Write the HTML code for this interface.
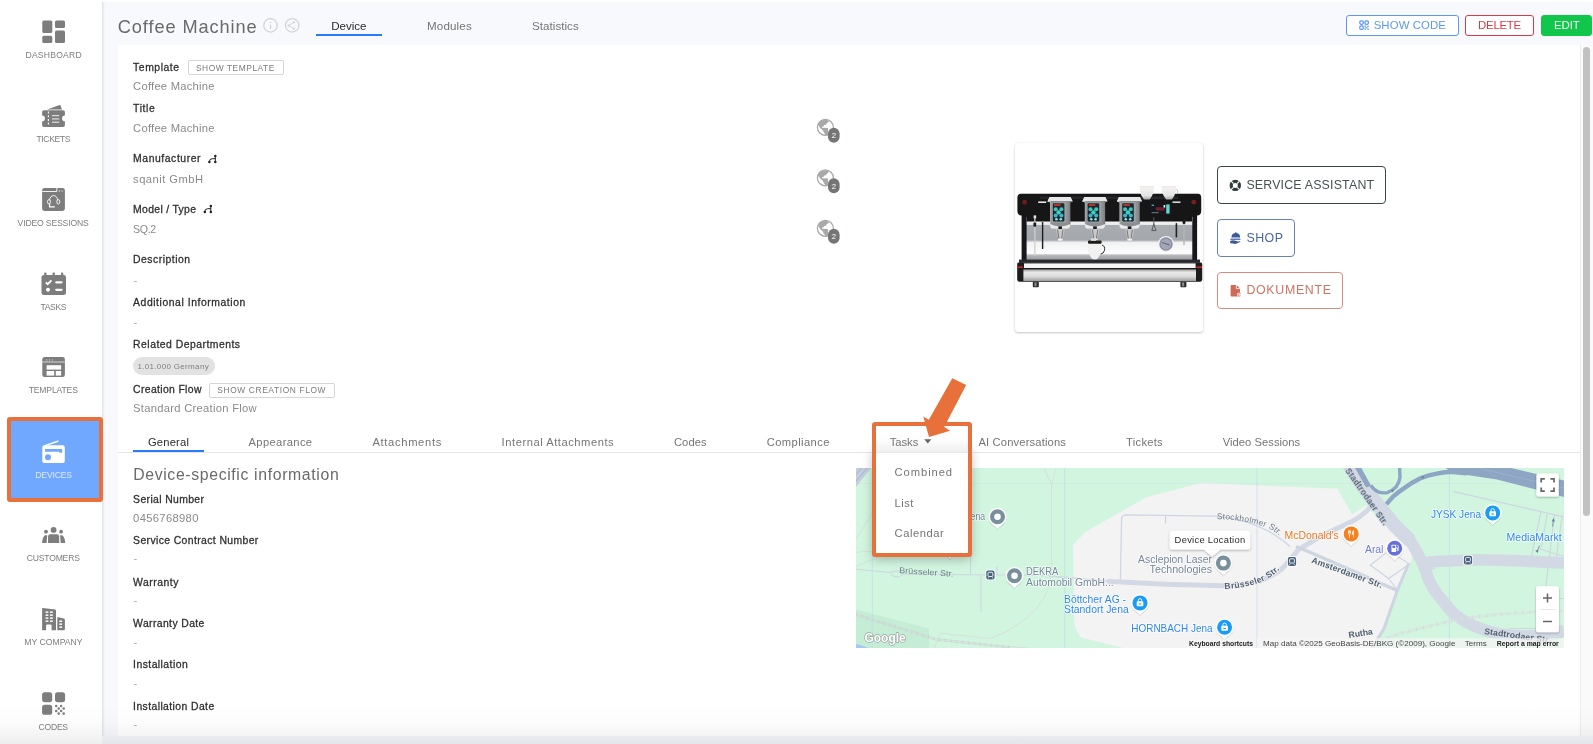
<!DOCTYPE html>
<html><head><meta charset="utf-8"><title>Coffee Machine</title>
<style>
*{box-sizing:border-box;margin:0;padding:0}
html,body{width:1593px;height:744px;overflow:hidden;background:#fff;font-family:"Liberation Sans",sans-serif}
.abs{position:absolute}
.t{position:absolute;white-space:pre;line-height:1;font-family:"Liberation Sans",sans-serif}
#main{position:absolute;left:102px;top:2px;width:1491px;height:742px;background:#f8f9fd}
#side{position:absolute;left:0;top:0;width:102px;height:744px;background:#fff}
#sideedge{position:absolute;left:102px;top:2px;width:5px;height:742px;background:linear-gradient(90deg,#e3e3e5 0,#e9e9ec 1px,#f2f2f7 2px,#f7f8fc 3.2px,#f8f9fd 5px)}
#card{position:absolute;left:118px;top:45px;width:1462px;height:691px;background:#fff}
#sbtrack{position:absolute;left:1580px;top:45px;width:13px;height:691px;background:#fafafa;border-left:1px solid #ececec}
#sbthumb{position:absolute;left:1583px;top:47px;width:7px;height:469px;border-radius:4px;background:#c1c1c1}
#botstrip{position:absolute;left:102px;top:736px;width:1491px;height:8px;background:#f5f6fa}
#botfade{position:absolute;left:0;top:706px;width:1593px;height:38px;background:linear-gradient(180deg,rgba(80,80,90,0) 0,rgba(80,80,90,.02) 45%,rgba(80,80,90,.095) 100%);z-index:50}
.btn{position:absolute;border:1px solid;border-radius:3px;background:#fff}
#devbox{position:absolute;left:7px;top:417px;width:96px;height:85px;background:#70a7ff;border:4px solid #e8703a;border-radius:3px}
.hl{position:absolute;height:2px;background:#2a7aff}
#txt{position:absolute;left:0;top:0;width:1593px;height:744px;will-change:transform;z-index:30}
#tabline{position:absolute;left:118px;top:452px;width:1462px;height:1px;background:#e6e6e6}
</style></head><body>
<div id="main"></div>
<div id="side"></div>
<div id="sideedge"></div>
<div id="card"></div>
<div id="sbtrack"></div><div id="sbthumb"></div>
<div id="botstrip"></div>
<div id="devbox"></div>
<!-- header -->
<div class="hl" style="left:316px;top:33.6px;width:66px"></div>
<div class="btn" style="left:1346px;top:15px;width:113px;height:21px;border-color:#5b97f5"></div>
<div class="btn" style="left:1465px;top:15px;width:69px;height:21px;border-color:#d83a4a"></div>
<div class="btn" style="left:1541px;top:15px;width:51px;height:21px;border-color:#10c64b;background:#10c64b"></div>
<!-- small buttons -->
<div class="btn" style="left:187.5px;top:60px;width:96.5px;height:15px;border-color:#d6d6d6;border-radius:2px"></div>
<div class="btn" style="left:209px;top:382.5px;width:125.5px;height:15px;border-color:#d6d6d6;border-radius:2px"></div>
<div class="abs" style="left:133px;top:356.5px;width:82px;height:18.5px;border-radius:10px;background:#e2e2e2"></div>
<!-- tabs -->
<div id="tabline"></div>
<div class="hl" style="left:133px;top:449.6px;width:71px"></div>
<!-- right buttons -->
<div class="btn" style="left:1217px;top:166px;width:168.5px;height:37.5px;border-color:#3a4646;border-radius:4px"></div>
<div class="btn" style="left:1217px;top:219px;width:77.5px;height:37.5px;border-color:#6683b5;border-radius:4px"></div>
<div class="btn" style="left:1217px;top:271.5px;width:126px;height:37.5px;border-color:#dd8a7a;border-radius:4px"></div>
<!-- sidebar icons -->
<svg class="abs" style="left:0;top:0;z-index:5" width="110" height="744" viewBox="0 0 110 744">
<g fill="#7d7d7d">
<!-- dashboard -->
<rect x="42.3" y="20.5" width="10" height="12.6" rx="1.6"/>
<rect x="55" y="20.5" width="10" height="7.5" rx="1.6"/>
<rect x="42.3" y="35.7" width="10" height="7.4" rx="1.6"/>
<rect x="55" y="30.6" width="10" height="12.5" rx="1.6"/>
<!-- tickets -->
<polygon points="47.2,109.6 59.6,105.1 60.6,105.5 62,109.6" />
<path d="M44 110.2 H63 a1.9 1.9 0 0 1 1.9 1.9 V115.6 a2.7 2.7 0 0 0 0 5.6 V125 a1.9 1.9 0 0 1 -1.9 1.9 H44 a1.9 1.9 0 0 1 -1.9 -1.9 V121.2 a2.7 2.7 0 0 0 0 -5.6 V112.1 a1.9 1.9 0 0 1 1.9 -1.9 Z"/>
<!-- video sessions -->
<rect x="42.1" y="188" width="22.8" height="22.9" rx="2.4"/>
<!-- tasks -->
<rect x="41.5" y="274.9" width="24.5" height="20.2" rx="2.4"/>
<rect x="44.2" y="272.4" width="2.2" height="4" rx="0.8"/>
<rect x="52.6" y="272.4" width="2.2" height="4" rx="0.8"/>
<rect x="61" y="272.4" width="2.2" height="4" rx="0.8"/>
<!-- templates -->
<rect x="42.3" y="357.1" width="22.6" height="20" rx="2.4"/>
<!-- customers -->
<circle cx="53.6" cy="529.9" r="2.9"/>
<path d="M50.2 534.2 H57 a2.2 2.2 0 0 1 2.1 2 L59.3 543 H48 L48.1 536.2 a2.2 2.2 0 0 1 2.1 -2 Z"/>
<circle cx="46" cy="531.7" r="1.9"/>
<circle cx="61.1" cy="531.7" r="1.9"/>
<path d="M45 535.2 H47.2 L46.6 543 H42.1 Q42.3 537.2 45 535.2 Z"/>
<path d="M62.2 535.2 H60.1 L60.7 543 H65.2 Q65 537.2 62.2 535.2 Z"/>
<!-- my company -->
<path d="M42.1 608.6 Q42.1 607.8 43 607.9 L55 609.4 Q56 609.5 56 610.4 V630.3 H51.6 V625.4 Q51.6 624.4 50.6 624.4 H47.1 Q46.1 624.4 46.1 625.4 V630.3 H42.1 Z"/>
<path d="M57.3 616.9 L63.8 618.6 Q64.9 618.9 64.9 620 V629.3 Q64.9 630.3 63.9 630.3 H57.3 Z"/>
<!-- codes -->
<rect x="42.1" y="692.2" width="10.1" height="10" rx="2.6"/>
<rect x="55" y="692.2" width="10.1" height="10" rx="2.6"/>
<rect x="42.1" y="704.8" width="10.1" height="10" rx="2.6"/>
<g>
<circle cx="56.2" cy="706" r="1.3"/><circle cx="61.1" cy="706" r="1.3"/>
<circle cx="58.7" cy="708.5" r="1.3"/><circle cx="63.7" cy="708.5" r="1.3"/>
<circle cx="56.2" cy="711" r="1.3"/><circle cx="61.1" cy="711" r="1.3"/>
<circle cx="58.7" cy="713.6" r="1.3"/><circle cx="63.7" cy="713.6" r="1.3"/>
</g>
</g>
<!-- ticket details -->
<g stroke="#fff" fill="none">
<line x1="48.4" y1="111.5" x2="48.4" y2="126" stroke-width="1.1" stroke-dasharray="2 1.7"/>
<g stroke="#d9d9d9" stroke-width="1.3"><line x1="52" y1="115.6" x2="59.2" y2="115.6"/><line x1="52" y1="118.9" x2="59.2" y2="118.9"/><line x1="52" y1="122.2" x2="59.2" y2="122.2"/></g>
</g>
<!-- video sessions details -->
<g stroke="#fff" fill="none" stroke-width="0.9">
<path d="M42.1 191.5 H56.8 V188"/>
<path d="M49.6 200.2 a4 4.6 0 0 1 8 0"/>
<ellipse cx="49" cy="201.8" rx="1.5" ry="2.2"/>
<ellipse cx="58.3" cy="201.8" rx="1.5" ry="2.2"/>
<path d="M49.6 204 V206.9 H54.8" stroke-width="1.1"/>
</g>
<circle cx="59.4" cy="191" r="0.7" fill="#ddd"/><circle cx="62.2" cy="191" r="0.7" fill="#ddd"/>
<!-- tasks details -->
<g stroke="#fff" fill="none" stroke-linecap="round">
<path d="M45.8 282.3 L47.7 284.2 L51.4 280.4" stroke-width="1.9" stroke-linejoin="miter" stroke-linecap="butt"/>
<line x1="56.3" y1="282.3" x2="61.5" y2="282.3" stroke-width="2.3"/>
<line x1="56.3" y1="289.8" x2="61.5" y2="289.8" stroke-width="2.3"/>
</g>
<circle cx="48" cy="289.8" r="2" fill="#fff"/>
<!-- templates details -->
<rect x="42.3" y="361.6" width="22.6" height="0.8" fill="#eee"/>
<circle cx="46.8" cy="360" r="0.65" fill="#ccc"/><circle cx="49.6" cy="360" r="0.65" fill="#ccc"/><circle cx="52.4" cy="360" r="0.65" fill="#ccc"/>
<rect x="46.6" y="365.2" width="14.5" height="4.4" fill="#fff"/>
<rect x="46.6" y="371" width="7.6" height="4.6" fill="#fff"/>
<rect x="55.8" y="371" width="5.3" height="4.6" fill="#fff"/>
<!-- company windows -->
<g fill="#fff">
<rect x="45.6" y="611.4" width="2.8" height="1.5"/><rect x="50" y="611.4" width="2.8" height="1.5"/>
<rect x="45.6" y="614.4" width="2.8" height="1.5"/><rect x="50" y="614.4" width="2.8" height="1.5"/>
<rect x="45.6" y="617.4" width="2.8" height="1.5"/><rect x="50" y="617.4" width="2.8" height="1.5"/>
<rect x="45.6" y="620.4" width="2.8" height="1.5"/><rect x="50" y="620.4" width="2.8" height="1.5"/>
<rect x="59.3" y="620.5" width="2.8" height="1.5"/><rect x="59.3" y="623.4" width="2.8" height="1.5"/><rect x="59.3" y="626.4" width="2.8" height="1.5"/>
</g>
<!-- devices (radio) -->
<g>
<rect x="42.3" y="445.3" width="22.5" height="17.8" rx="2.2" fill="#fff"/>
<line x1="45" y1="445.6" x2="57.9" y2="441.2" stroke="#fff" stroke-width="1.5" stroke-linecap="round"/>
<path d="M45 449 H62.1 V452.8 H59.2 V451.7 H45 Z" fill="#70a7ff"/>
<circle cx="48" cy="457.3" r="3" fill="#70a7ff"/>
</g>
</svg>

<!-- small icons -->
<svg class="abs" style="left:0;top:0;z-index:6" width="1593" height="320" viewBox="0 0 1593 320">
<!-- info + share -->
<g fill="none" stroke="#d3d3d3" stroke-width="1.3">
<circle cx="270.5" cy="25.4" r="6.7"/>
<circle cx="292.2" cy="25.4" r="6.7"/>
<line x1="270.5" y1="24.5" x2="270.5" y2="29" stroke-width="1.2"/>
<path d="M293.9 22.3 L288.6 25.6 L293.9 28.7" stroke-width="0.9"/>
</g>
<g fill="#d0d0d0"><circle cx="270.5" cy="22.4" r="0.75"/><circle cx="293.9" cy="22.3" r="1.1"/><circle cx="288.6" cy="25.6" r="1.1"/><circle cx="293.9" cy="28.7" r="1.1"/></g>
<!-- tree icons -->
<g fill="#222" stroke="#222" stroke-width="1" >
<g id="tree1"><circle cx="215.3" cy="156" r="1.25" stroke="none"/><circle cx="215.3" cy="162" r="1.25" stroke="none"/><circle cx="209.4" cy="162" r="1.25" stroke="none"/>
<path d="M215.3 156 V162 M209.4 162 Q209.2 158.8 212.2 158.7 H215.3" fill="none"/></g>
<g><circle cx="210.8" cy="206.1" r="1.25" stroke="none"/><circle cx="210.8" cy="211.9" r="1.25" stroke="none"/><circle cx="204.8" cy="211.9" r="1.25" stroke="none"/>
<path d="M210.8 206.1 V211.9 M204.8 211.9 Q204.6 208.8 207.6 208.7 H210.8" fill="none"/></g>
</g>
<!-- show code qr icon -->
<g fill="none" stroke="#5b97f5" stroke-width="1.25">
<rect x="1359.8" y="20.8" width="3.5" height="3.5" rx="1.2"/>
<rect x="1364.9" y="20.8" width="3.5" height="3.5" rx="1.2"/>
<rect x="1359.8" y="25.9" width="3.5" height="3.5" rx="1.2"/>
</g>
<g fill="#7fb0fa"><rect x="1364.4" y="25.4" width="1.6" height="1.6"/><rect x="1367" y="25.6" width="1.8" height="1.6"/><rect x="1365.4" y="27" width="2" height="1.5"/><rect x="1364.4" y="28.4" width="1.6" height="1.5"/><rect x="1367.2" y="28.4" width="1.7" height="1.5"/></g>
<g>
<circle cx="825.4" cy="127.4" r="8" fill="#fff" stroke="#a9a9a9" stroke-width="1.3"/>
<path d="M818.2 124.9 Q819.2 120.4 825 119.80000000000001 Q828.5 120.0 829 121.80000000000001 L826.6 123.2 L826.2 124.80000000000001 L824 125.0 L823.6 126.60000000000001 L822 126.80000000000001 L822 127.80000000000001 L828 128.0 L828 135.0 L825.6 135.20000000000002 L823.6 131.9 L822.5 130.0 Q819.5 127.9 818.2 124.9 Z" fill="#a9a9a9"/>
<rect x="828" y="127.80000000000001" width="11.6" height="15" rx="5.8" fill="#757575"/>
<text x="833.8" y="138.0" font-family="Liberation Sans, sans-serif" font-size="7.6" fill="#fff" text-anchor="middle">2</text>
</g>
<g>
<circle cx="825.4" cy="177.9" r="8" fill="#fff" stroke="#a9a9a9" stroke-width="1.3"/>
<path d="M818.2 175.4 Q819.2 170.9 825 170.3 Q828.5 170.5 829 172.3 L826.6 173.70000000000002 L826.2 175.3 L824 175.5 L823.6 177.1 L822 177.3 L822 178.3 L828 178.5 L828 185.5 L825.6 185.70000000000002 L823.6 182.4 L822.5 180.5 Q819.5 178.4 818.2 175.4 Z" fill="#a9a9a9"/>
<rect x="828" y="178.3" width="11.6" height="15" rx="5.8" fill="#757575"/>
<text x="833.8" y="188.5" font-family="Liberation Sans, sans-serif" font-size="7.6" fill="#fff" text-anchor="middle">2</text>
</g>
<g>
<circle cx="825.4" cy="228.4" r="8" fill="#fff" stroke="#a9a9a9" stroke-width="1.3"/>
<path d="M818.2 225.9 Q819.2 221.4 825 220.8 Q828.5 221.0 829 222.8 L826.6 224.20000000000002 L826.2 225.8 L824 226.0 L823.6 227.6 L822 227.8 L822 228.8 L828 229.0 L828 236.0 L825.6 236.20000000000002 L823.6 232.9 L822.5 231.0 Q819.5 228.9 818.2 225.9 Z" fill="#a9a9a9"/>
<rect x="828" y="228.8" width="11.6" height="15" rx="5.8" fill="#757575"/>
<text x="833.8" y="239.0" font-family="Liberation Sans, sans-serif" font-size="7.6" fill="#fff" text-anchor="middle">2</text>
</g>
<!-- lifebuoy -->
<g>
<circle cx="1235.3" cy="185.4" r="4.1" fill="none" stroke="#2f3d3d" stroke-width="3.2"/>
<g stroke="#fff" stroke-width="1.1"><line x1="1231.1" y1="181.2" x2="1233.4" y2="183.5"/><line x1="1239.5" y1="181.2" x2="1237.2" y2="183.5"/><line x1="1231.1" y1="189.6" x2="1233.4" y2="187.3"/><line x1="1239.5" y1="189.6" x2="1237.2" y2="187.3"/></g>
</g>
<!-- shop icon -->
<g fill="#3a5a9a">
<path d="M1231.4 237.6 Q1231.6 233.4 1235.2 233 L1235.2 232.2 H1236.4 L1236.4 233 Q1240 233.4 1240.2 237.6 Z"/>
<path d="M1230.4 238.6 H1240.4 V239.8 H1230.4 Z"/>
<path d="M1230.2 241 Q1232.5 239.9 1234.5 240.6 L1237.4 241.3 Q1238.2 241.6 1237.6 242.2 L1235 242.2 L1239.6 241.2 Q1240.6 241.1 1240.2 242 L1236 243.8 Q1234.5 244.2 1233 243.6 L1230.2 243.2 Z"/>
</g>
<!-- document icon -->
<g>
<path d="M1231.6 285 H1236.6 L1240 288.4 V296.4 H1231.6 Q1230.6 296.4 1230.6 295.4 V286 Q1230.6 285 1231.6 285 Z" fill="#cf6a58"/>
<path d="M1236.4 285 V288.6 H1240" fill="none" stroke="#fff" stroke-width="0.8"/>
<circle cx="1239.3" cy="294.6" r="2.2" fill="#fff"/>
<path d="M1240.6 293.5 A1.4 1.4 0 1 0 1240.6 295.7" fill="none" stroke="#cf6a58" stroke-width="0.9"/>
</g>
</svg>

<!-- image card -->
<div class="abs" style="left:1015px;top:143px;width:188px;height:189px;background:#fff;border-radius:3px;box-shadow:0 1px 2.5px rgba(0,0,0,.22), 0 0 1px rgba(0,0,0,.12)"></div>
<svg class="abs" style="left:1015px;top:143px" width="188" height="189" viewBox="1015 143 188 189">
<defs>
<linearGradient id="chrome" x1="0" y1="0" x2="0" y2="1">
<stop offset="0" stop-color="#f4f4f4"/><stop offset="0.13" stop-color="#ececec"/><stop offset="0.15" stop-color="#a9adb2"/><stop offset="0.5" stop-color="#a4a8ad"/><stop offset="0.56" stop-color="#f2f2f2"/><stop offset="0.82" stop-color="#fdfdfd"/><stop offset="0.86" stop-color="#b8babd"/><stop offset="1" stop-color="#8e9094"/>
</linearGradient>
<linearGradient id="base" x1="0" y1="0" x2="0" y2="1">
<stop offset="0" stop-color="#9a9a9a"/><stop offset="0.25" stop-color="#e9e9e9"/><stop offset="0.6" stop-color="#dcdcdc"/><stop offset="1" stop-color="#a0a0a0"/>
</linearGradient>
<linearGradient id="head" x1="0" y1="0" x2="1" y2="0">
<stop offset="0" stop-color="#d9d9d9"/><stop offset="0.18" stop-color="#8d9093"/><stop offset="0.82" stop-color="#8d9093"/><stop offset="1" stop-color="#55585b"/>
</linearGradient>
<linearGradient id="cup" x1="0" y1="0" x2="0" y2="1">
<stop offset="0" stop-color="#f3e3e0"/><stop offset="0.15" stop-color="#f1f1f1"/><stop offset="0.7" stop-color="#e4e4e4"/><stop offset="1" stop-color="#a8a8a8"/>
</linearGradient>
<filter id="soft" x="-5%" y="-5%" width="110%" height="110%"><feGaussianBlur stdDeviation="0.45"/></filter>
<g id="ghead">
<path d="M2.2 0 H23.2 L25.4 4.6 L23 5.4 V27.4 Q23 31.6 19 31.8 H6.4 Q2.6 31.6 2.6 27.4 V5.4 L0 4.6 Z" fill="url(#head)"/>
<path d="M2.2 0 H23.2 L25.4 4.6 L22.4 4 H3 L0 4.6 Z" fill="#e6e6e6"/>
<rect x="4.4" y="5.2" width="14.6" height="20.2" rx="1.2" fill="#9ea1a4"/>
<rect x="5.4" y="6.2" width="11.6" height="18.2" rx="0.8" fill="#1d2a33"/>
<rect x="6.6" y="7" width="6.5" height="2" fill="#b5332c"/>
<circle cx="8.3" cy="12.2" r="2" fill="#3ec6bc"/><circle cx="14" cy="12.2" r="2" fill="#3ec6bc"/>
<circle cx="11.2" cy="15.4" r="2.2" fill="#45d0c4"/>
<circle cx="8.3" cy="18.6" r="2" fill="#3ab7c9"/><circle cx="14" cy="18.6" r="2" fill="#3ab7c9"/>
<circle cx="9" cy="22.3" r="1.3" fill="#8fe3ea"/><circle cx="13.4" cy="22.3" r="1.3" fill="#8fe3ea"/>
<path d="M2.6 27 Q8 29.6 12.8 29.4 Q18 29.6 23 27 V28.4 Q22.6 31.8 19 31.8 H6.4 Q2.8 31.8 2.6 28.4 Z" fill="#e9e9e9"/>
<rect x="11" y="29.4" width="3.6" height="2.6" fill="#1a1a1a"/>
<path d="M8.6 32 H17.2 L16.2 38 L14.6 43 H11.2 L9.8 38 Z" fill="#c9c9c9"/>
<path d="M10.2 32.6 L11.6 42 M15.6 32.6 L14.2 42" stroke="#6d6d6d" stroke-width="0.9" fill="none"/>
<rect x="10.6" y="41.6" width="4.6" height="2" fill="#f4f4f4"/>
</g>
</defs>
<g filter="url(#soft)">
<!-- chrome body -->
<rect x="1023" y="219" width="173" height="42" fill="url(#chrome)"/>
<!-- pillars -->
<rect x="1021.6" y="214" width="5" height="48" fill="#17181a"/>
<rect x="1192.3" y="214" width="4.8" height="48" fill="#17181a"/>
<!-- black top band -->
<path d="M1021 193.8 H1198 Q1201.2 194 1201.2 197.5 V211 Q1201.2 215.4 1197 215.6 L1192 217 V221.6 H1026.6 V217 L1021.6 215.6 Q1017.4 215.4 1017.4 211 V197.5 Q1017.4 194 1021 193.8 Z" fill="#131416"/>
<path d="M1040 196.4 H1178 V199 H1040 Z" fill="#25272a"/>
<circle cx="1024.6" cy="202.2" r="2.4" fill="#701a1c"/>
<circle cx="1193.8" cy="202.2" r="2.4" fill="#7a1d22"/>
<rect x="1038.2" y="201.4" width="8" height="1.6" fill="#e8e8e8"/>
<rect x="1172.5" y="201.4" width="8" height="1.6" fill="#d8d8d8"/>
<!-- cups on top -->
<path d="M1139.6 186 H1154 Q1154 194 1150.6 198 L1149.8 199.6 H1143.8 L1143 198 Q1139.6 194 1139.6 186 Z" fill="url(#cup)"/>
<path d="M1161.6 186 H1176.2 Q1176.2 194 1172.8 198 L1172 199.6 H1166 L1165.2 198 Q1161.6 194 1161.6 186 Z" fill="url(#cup)"/>
<path d="M1176.2 189 Q1178.6 190 1177.4 193.6" stroke="#bdbdbd" stroke-width="0.9" fill="none"/>
<!-- control panel -->
<rect x="1149.5" y="203.5" width="21.5" height="10.8" fill="#14191d"/>
<rect x="1156" y="207.2" width="8.6" height="3.4" fill="#6a2230"/>
<rect x="1166.2" y="204.4" width="3.4" height="9.2" fill="#5fd5cf"/>
<rect x="1151.6" y="204.6" width="2.4" height="1.4" fill="#3fae9f"/>
<rect x="1151.6" y="212" width="7" height="1.2" fill="#56707a"/>
<rect x="1163.6" y="205" width="1.6" height="2.6" fill="#d8f2f2"/>
<!-- wands -->
<rect x="1033.6" y="215.4" width="2.6" height="3" fill="#e4e4e4"/>
<rect x="1034.2" y="218" width="1.3" height="38" fill="#cfcfcf"/>
<rect x="1033.4" y="222.6" width="2.8" height="4.2" rx="1" fill="#1b1b1b"/>
<rect x="1041.9" y="222" width="1.4" height="27" rx="0.6" fill="#1b1b1b"/>
<rect x="1175.6" y="223" width="1.6" height="14.5" rx="0.7" fill="#222"/>
<rect x="1183.3" y="221" width="1.4" height="24" fill="#b4b4b4"/>
<rect x="1182.6" y="219" width="2.8" height="5" rx="1" fill="#1b1b1b"/>
<path d="M1153.8 217 V223.6 M1151.8 230.6 L1153.8 223.6 L1155.9 230.6 Z" stroke="#54585c" stroke-width="1" fill="none"/>
<!-- group heads -->
<use href="#ghead" x="1047.4" y="197"/>
<use href="#ghead" x="1082.2" y="197"/>
<use href="#ghead" x="1116.8" y="197"/>
<!-- gauge -->
<circle cx="1166" cy="244" r="8" fill="#f0f0f0"/>
<circle cx="1166" cy="244" r="6.7" fill="#8d8fa3"/>
<circle cx="1166" cy="244" r="5.2" fill="#a3a6b8"/>
<line x1="1162" y1="242.6" x2="1169.6" y2="245" stroke="#4b4d60" stroke-width="0.8"/>
<!-- center cup -->
<path d="M1087.4 243 H1102 Q1102.2 252 1098.2 257.8 Q1094.8 262.4 1091.2 257.8 Q1087.2 252 1087.4 243 Z" fill="#f1f1f1"/>
<path d="M1102 245 Q1105.4 246 1104.4 250.6 Q1103.6 253.6 1100.8 254" stroke="#2a2a2a" stroke-width="1" fill="none"/>
<rect x="1088" y="240.4" width="13.6" height="3.4" rx="1.2" fill="#1d1a19"/>
<rect x="1091" y="238.4" width="5" height="2.4" fill="#dcdcdc"/>
<!-- drip tray line & base -->
<rect x="1019" y="259.6" width="181" height="3.2" fill="#2a2b2d"/>
<path d="M1018.4 262.4 H1200.8 Q1202.2 262.6 1202.2 264 V279.6 Q1202.2 281.8 1200 281.8 H1019.4 Q1017.2 281.8 1017.2 279.6 V264 Q1017.2 262.6 1018.4 262.4 Z" fill="#1b1c1e"/>
<rect x="1024" y="263.4" width="171.6" height="4.6" fill="#f6f6f6"/>
<rect x="1023.4" y="269.4" width="172.6" height="11.6" fill="url(#base)"/>
<rect x="1017.4" y="266.4" width="5.6" height="1.6" fill="#c4262a"/>
<rect x="1196.4" y="266.4" width="5.6" height="1.6" fill="#c4262a"/>
<!-- feet -->
<rect x="1032.8" y="281.8" width="6" height="5.4" rx="1" fill="#2b2b2b"/>
<rect x="1034.4" y="282.4" width="2.2" height="4" fill="#8a8a8a"/>
<rect x="1180.4" y="281.8" width="6" height="5.4" rx="1" fill="#2b2b2b"/>
<rect x="1182" y="282.4" width="2.2" height="4" fill="#8a8a8a"/>
</g>
</svg>

<!-- map -->
<svg class="abs" style="left:856px;top:467.5px;z-index:8;will-change:transform" width="708" height="180" viewBox="856 467.5 708 180" font-family="Liberation Sans, sans-serif">
<defs>
<filter id="pinsh" x="-30%" y="-30%" width="160%" height="160%"><feDropShadow dx="0" dy="0.6" stdDeviation="0.7" flood-color="#000" flood-opacity=".3"/></filter>
<filter id="boxsh" x="-20%" y="-30%" width="140%" height="170%"><feDropShadow dx="0" dy="1" stdDeviation="1.3" flood-color="#000" flood-opacity=".3"/></filter>
</defs>
<rect x="856" y="467.5" width="708" height="180" fill="#d2f5e0"/>
<path d="M856 609 L929 628 L929 647.5 H856 Z" fill="#c5ecd4"/>
<path d="M856 643.6 Q862 644.5 868 647.5 H856 Z" fill="#a6c8f2"/>
<!-- gray area -->
<path d="M1073 544 L1086 531 L1146.5 496.7 L1201.5 482.3 L1256.6 484.9 L1337.5 488.3 L1352 514 L1366 505 L1376 516 L1392 532 L1404 543 L1413 552 L1409.6 564.8 L1397.8 589.7 L1384 628 L1374 647.5 H1123 L1081 637 L1074.5 626 Z" fill="#f3f3f3"/>
<!-- top-left wedge -->
<path d="M856 467.5 H871 L856 486.5 Z" fill="#c3cede"/>
<path d="M856 474 L861.6 467.5 M856 480.6 L867 467.5" stroke="#9fb0cf" stroke-width="0.9" fill="none"/>
<!-- faint outlines -->
<g fill="none" stroke="#d7ded9" stroke-width="0.9">
<path d="M1044 467.5 L1051.5 484 V570 Q1050 592 1038 606 Q1016 630 990 638 L944 633 Q938 632 938 640 L934 647.5"/>
<path d="M1051.5 484 L1056 467.5"/>
<path d="M856 538 Q870 520 878 500 M856 552 Q872 548 880 556 M856 566 Q868 560 880 556 V470"/>
</g>
<!-- thin roads left -->
<g fill="none" stroke="#cfd6e1" stroke-width="1.1">
<path d="M856 568.7 L891 572 Q898 568 903 573.5 Q898 579 891 574 M903 573.5 L970.5 574.2 L1007 574.5 L1049 575.3 L1073 578"/>
<path d="M981 574.5 V611.5"/>
<path d="M970.5 554 V574"/>
<path d="M997 574.5 V566"/>
</g>
<!-- railway bottom-left -->
<path d="M856 613.4 L936.5 638.2 L1010 646 L1030 648" stroke="#cfd7d8" stroke-width="0.8" fill="none"/><path d="M856 615 L936.5 639.8 L1010 647.4" stroke="#cfd7d8" stroke-width="0.8" fill="none"/>
<path d="M856 614.2 L936.5 639 L1010 646.8" stroke="#c4cdd0" stroke-width="3.2" fill="none" stroke-dasharray="0.6 5.2"/>
<!-- tile lines -->
<g stroke="#b9d9ee" stroke-width="0.6" fill="none"><path d="M872.3 467.5 V647.5 M1064.6 467.5 V647.5 M1257 467.5 V647.5 M1449.4 467.5 V647.5"/><path d="M856 483 H1564" opacity=".4"/></g>
<!-- Stockholmer loop -->
<g fill="none" stroke="#cdd6e4" stroke-width="1.3">
<path d="M1120.4 579.5 L1121.6 518.5 Q1121.8 514.6 1125.6 514.4 L1215 515.6 Q1262 520 1290 546"/>
<path d="M1165.6 515 V523"/>
</g>
<!-- Bruesseler (gray area) -->
<path d="M1049 575.3 L1075 577.6 L1108 580.6" stroke="#cdd5e0" stroke-width="1.3" fill="none"/><path d="M1109 580.8 L1112.4 581.1 L1164.9 583.7 L1222.5 585.3 Q1244 584.6 1259.2 580.6 Q1274 575 1282.8 567.5 L1298.5 549.1 L1320 536 L1352 521 Q1366 514 1378 497" stroke="#d3d9e4" stroke-width="5" fill="none" stroke-linecap="round"/>
<!-- Amsterdamer + Rutha -->
<path d="M1296 546 L1310 551.7 L1396.5 589.7" stroke="#ccd5e0" stroke-width="3.4" fill="none"/>
<path d="M1408.5 563.5 L1397.5 589.5 L1384 628 L1372 647.5" stroke="#ccd5e0" stroke-width="3" fill="none"/>
<!-- Aral outline -->
<path d="M1370.3 564.8 L1388.6 550.4 L1409.6 563.5 L1388.6 578 Z M1388.6 578 L1397.5 589.5" stroke="#ccd5e2" stroke-width="1.1" fill="none"/>
<!-- thin roads right -->
<g fill="none" stroke="#cfd6e2" stroke-width="1.2">
<path d="M1452.8 490.8 L1564 516.4"/>
<path d="M1541 511.4 L1532 553 M1547.4 513 L1541 548 M1554.4 514.6 L1546 584 M1562 516 L1556 560 M1538 548 L1564 556"/>
<path d="M1532 553 Q1531 562 1540 562"/>
<path d="M1546 584 V606 M1540 598 H1564"/>
<path d="M1500 636 Q1503 628 1512 628 H1564"/>
</g>
<!-- railway right -->
<path d="M1524 647.5 L1564 636" stroke="#a9d8b8" stroke-width="1" fill="none"/>
<!-- main roads -->
<path d="M1420 562.4 L1440 560.8 L1480 559.2 L1520 560.4 L1564 562.6" stroke="#d3d9e4" stroke-width="11.6" fill="none"/><path d="M1430 570 L1432.5 566 L1436 568 Z" fill="#d3d9e4"/>
<path d="M1346.5 461 L1351.5 467.5 L1362 484.6 L1395 525.3 L1410.3 540.3 Q1419 554 1424 566 L1429.2 580.3 Q1435 592 1443 600.5 Q1448 607.5 1454.4 613.9 Q1465 622 1479 627.4 Q1490 631.5 1500 633.5 Q1522 637 1545 634.5 L1564 630" stroke="#d3d9e4" stroke-width="11.8" fill="none" stroke-linejoin="round"/>
<g fill="none"><path d="M1374 641.6 L1400 632.2 L1437.6 622.8 L1464.5 616.8 L1500 612.8 L1537 610.5 L1564 610" stroke="#d9dfde" stroke-width="0.8"/><path d="M1376 642.8 L1400 633.8 L1437.6 624.4 L1464.5 618.4 L1500 614.4 L1537 612.1 L1564 611.6" stroke="#d9dfde" stroke-width="0.8"/><path d="M1375 642.2 L1400 633 L1437.6 623.6 L1464.5 617.6 L1500 613.6 L1537 611.3 L1564 610.8" stroke="#cfd6d6" stroke-width="3.4" stroke-dasharray="0.7 6.5"/></g>
<path d="M1346.5 461 L1351.5 467.5 L1362 484.6 L1395 525.3 L1410.3 540.3" stroke="#d3d9e4" stroke-width="14" fill="none" stroke-linejoin="round"/>
<!-- highway -->
<path d="M1446 467.5 H1511 L1564 480 V496.4 L1536 489 L1497 479 L1467 474.6 L1452 473 Z" fill="#8ea5c4"/>
<path d="M1480 468 L1564 487.6" stroke="#9db1cd" stroke-width="0.9" fill="none"/>
<path d="M1386.4 503.6 L1393.3 495.9 Q1399 491 1405.3 486.9 Q1412 482 1420.4 477.8 Q1428 474.6 1435.5 473.3 Q1443 471.6 1450.5 471.3 L1467 472.8" stroke="#8ea5c4" stroke-width="4.4" fill="none"/>
<path d="M1357.4 466 L1367.4 484" stroke="#8ea5c4" stroke-width="5.4" fill="none" stroke-linecap="round"/>
<path d="M1370.7 484.6 Q1374 489.6 1378.2 491.4 Q1383 493 1387.2 492.1 Q1393 490 1396.3 486.1 Q1399.4 481.4 1400 477 L1399.6 467.5" stroke="#8ea5c4" stroke-width="3.4" fill="none"/>
<g fill="#6c7f9a"><path d="M1421 476.4 l3.4 -1 l-1.6 3.2 z"/><path d="M1391 489.6 l3.6 -0.4 l-2.4 2.8 z"/><path d="M1553.4 517.6 l1.6 3.4 h-3.2 z"/><path d="M1537.6 552.4 l-2.4 -2.4 l3.4 -0.6 z"/></g>
<g stroke="#6c7f9a" stroke-width="0.8"><path d="M1553.4 520 L1552.6 526 M1537 551 L1539.6 545"/></g>
<g><rect x="985.3" y="569.1" width="10.2" height="10.8" rx="2.8" fill="#fff" opacity=".8"/><rect x="986.3" y="570.1" width="8.2" height="8.8" rx="2" fill="#47607a"/><rect x="988.0" y="571.8" width="4.8" height="4.2" rx="0.9" fill="none" stroke="#fff" stroke-width="0.9"/><path d="M988.3 576.9 v1 M992.5 576.9 v1" stroke="#fff" stroke-width="0.9"/></g>
<g><rect x="1286.9" y="555.6" width="10.2" height="10.8" rx="2.8" fill="#fff" opacity=".8"/><rect x="1287.9" y="556.6" width="8.2" height="8.8" rx="2" fill="#47607a"/><rect x="1289.6" y="558.3" width="4.8" height="4.2" rx="0.9" fill="none" stroke="#fff" stroke-width="0.9"/><path d="M1289.9 563.4 v1 M1294.1 563.4 v1" stroke="#fff" stroke-width="0.9"/></g>
<g><rect x="1462.9" y="554.2" width="10.2" height="10.8" rx="2.8" fill="#fff" opacity=".8"/><rect x="1463.9" y="555.2" width="8.2" height="8.8" rx="2" fill="#47607a"/><rect x="1465.6" y="556.9" width="4.8" height="4.2" rx="0.9" fill="none" stroke="#fff" stroke-width="0.9"/><path d="M1465.9 562.0 v1 M1470.1 562.0 v1" stroke="#fff" stroke-width="0.9"/></g>
<g><path d="M997.5 528.7 Q996.0 526.3 991.9 523.5 A9.1 9.1 0 1 1 1003.1 523.5 Q999.0 526.3 997.5 528.7 Z" fill="#fff" filter="url(#pinsh)"/><circle cx="997.5" cy="516.3" r="7.5" fill="#78909c"/><circle cx="997.5" cy="516.3" r="3.3" fill="#fff"/></g>
<g><path d="M950 558.4 Q948.5 556.0 944.4 553.2 A9.1 9.1 0 1 1 955.6 553.2 Q951.5 556.0 950 558.4 Z" fill="#fff" filter="url(#pinsh)"/><circle cx="950" cy="546" r="7.5" fill="#78909c"/><circle cx="950" cy="546" r="3.3" fill="#fff"/></g>
<g><path d="M1014.5 587.7 Q1013.0 585.3 1008.9 582.5 A9.1 9.1 0 1 1 1020.1 582.5 Q1016.0 585.3 1014.5 587.7 Z" fill="#fff" filter="url(#pinsh)"/><circle cx="1014.5" cy="575.3" r="7.5" fill="#78909c"/><circle cx="1014.5" cy="575.3" r="3.3" fill="#fff"/></g>
<g><path d="M1223.4 575.0 Q1221.9 572.6 1217.8 569.8 A9.1 9.1 0 1 1 1229.0 569.8 Q1224.9 572.6 1223.4 575.0 Z" fill="#fff" filter="url(#pinsh)"/><circle cx="1223.4" cy="562.6" r="7.5" fill="#78909c"/><circle cx="1223.4" cy="562.6" r="3.3" fill="#fff"/></g>
<g><path d="M1140 614.8 Q1138.5 612.4 1134.4 609.6 A9.1 9.1 0 1 1 1145.6 609.6 Q1141.5 612.4 1140 614.8 Z" fill="#fff" filter="url(#pinsh)"/><circle cx="1140" cy="602.4" r="7.5" fill="#1a9bf5"/><rect x="1136.7" y="600.8" width="6.6" height="5" rx="0.8" fill="#fff"/><path d="M1138.3 601.0 V599.8 a1.7 1.7 0 0 1 3.4 0 V601.0" fill="none" stroke="#fff" stroke-width="0.9"/><rect x="1138.6" y="603.0" width="2.8" height="1" fill="#1a9bf5"/></g>
<g><path d="M1224.6 639.2 Q1223.1 636.8 1219.0 634.0 A9.1 9.1 0 1 1 1230.2 634.0 Q1226.1 636.8 1224.6 639.2 Z" fill="#fff" filter="url(#pinsh)"/><circle cx="1224.6" cy="626.8" r="7.5" fill="#1a9bf5"/><rect x="1221.3" y="625.2" width="6.6" height="5" rx="0.8" fill="#fff"/><path d="M1222.9 625.4 V624.2 a1.7 1.7 0 0 1 3.4 0 V625.4" fill="none" stroke="#fff" stroke-width="0.9"/><rect x="1223.2" y="627.4" width="2.8" height="1" fill="#1a9bf5"/></g>
<g><path d="M1492.7 524.8 Q1491.2 522.4 1487.1 519.6 A9.1 9.1 0 1 1 1498.3 519.6 Q1494.2 522.4 1492.7 524.8 Z" fill="#fff" filter="url(#pinsh)"/><circle cx="1492.7" cy="512.4" r="7.5" fill="#1a9bf5"/><rect x="1489.4" y="510.8" width="6.6" height="5" rx="0.8" fill="#fff"/><path d="M1491.0 511.0 V509.8 a1.7 1.7 0 0 1 3.4 0 V511.0" fill="none" stroke="#fff" stroke-width="0.9"/><rect x="1491.3" y="513.0" width="2.8" height="1" fill="#1a9bf5"/></g>
<g><path d="M1351.2 545.8 Q1349.7 543.4 1345.6 540.6 A9.1 9.1 0 1 1 1356.8 540.6 Q1352.7 543.4 1351.2 545.8 Z" fill="#fff" filter="url(#pinsh)"/><circle cx="1351.2" cy="533.4" r="7.5" fill="#f5811f"/><path d="M1348.6 529.8 V532.8 Q1348.6 534.0 1349.5 534.1 V537.2 M1350.4 529.8 V532.8 Q1350.4 534.0 1349.5 534.1 M1349.5 529.8 V532.6" stroke="#fff" stroke-width="0.8" fill="none"/><path d="M1353.6 537.2 V529.8 Q1352.0 530.8 1352.2 534.0 H1353.6" fill="#fff" stroke="#fff" stroke-width="0.5"/></g>
<g><path d="M1394.7 560.2 Q1393.2 557.8 1389.1 555.0 A9.1 9.1 0 1 1 1400.3 555.0 Q1396.2 557.8 1394.7 560.2 Z" fill="#fff" filter="url(#pinsh)"/><circle cx="1394.7" cy="547.8" r="7.5" fill="#6571d6"/><rect x="1391.5" y="544.2" width="4.6" height="7.4" rx="0.6" fill="#fff"/><rect x="1392.4" y="545.1" width="2.8" height="2.4" fill="#6571d6"/><path d="M1396.1 547.4 H1397.3 V550.2 Q1398.1 550.8 1398.3 549.8 V545.6 L1397.1 544.4" fill="none" stroke="#fff" stroke-width="0.8"/></g>

<g font-size="10.3" fill="#74889a" stroke="#fff" stroke-opacity=".75" stroke-width="1.6" paint-order="stroke" stroke-linejoin="round">
<text x="970.6" y="519.6" textLength="14.5" lengthAdjust="spacingAndGlyphs">ena</text>
<text x="1026" y="574.9" textLength="32.3" lengthAdjust="spacingAndGlyphs">DEKRA</text>
<text x="1026" y="585.8" textLength="87.7" lengthAdjust="spacingAndGlyphs">Automobil GmbH...</text>
<text x="1138" y="562.4" textLength="74" lengthAdjust="spacingAndGlyphs">Asclepion Laser</text>
<text x="1149.6" y="572.8" textLength="62.4" lengthAdjust="spacingAndGlyphs">Technologies</text>
</g>
<g font-size="10.4" fill="#2f86ee" stroke="#fff" stroke-opacity=".8" stroke-width="1.6" paint-order="stroke" stroke-linejoin="round">
<text x="1064" y="602.4" textLength="62" lengthAdjust="spacingAndGlyphs">Böttcher AG -</text>
<text x="1064" y="612.8" textLength="64.7" lengthAdjust="spacingAndGlyphs">Standort Jena</text>
<text x="1131.3" y="631.6" textLength="81.3" lengthAdjust="spacingAndGlyphs">HORNBACH Jena</text>
<text x="1431" y="517.8" textLength="50" lengthAdjust="spacingAndGlyphs">JYSK Jena</text>
<text x="1506.6" y="540.8" textLength="55" lengthAdjust="spacingAndGlyphs">MediaMarkt</text>
</g>
<text x="1284.6" y="538.4" font-size="10.4" fill="#e8761f" stroke="#fff" stroke-opacity=".8" stroke-width="1.6" paint-order="stroke" stroke-linejoin="round" textLength="54.2" lengthAdjust="spacingAndGlyphs">McDonald's</text>
<text x="1365" y="552.8" font-size="10.4" fill="#6f7cd6" stroke="#fff" stroke-opacity=".8" stroke-width="1.6" paint-order="stroke" stroke-linejoin="round" textLength="18.4" lengthAdjust="spacingAndGlyphs">Aral</text>
<g font-size="8.4" fill="#6f7d8b">
<text x="899" y="572.6" transform="rotate(3.8 899 572.6)" textLength="54.5" lengthAdjust="spacingAndGlyphs">Brüsseler Str.</text>
<path id="ps" d="M1216.6 518.4 Q1246 519.6 1266 526.6 Q1274 530 1280.5 536" fill="none" stroke="none"/><text><textPath href="#ps" textLength="66" lengthAdjust="spacing">Stockholmer Str.</textPath></text>

</g>
<g font-size="8.6" font-weight="700" fill="#4f6072" stroke="#f3f3f3" stroke-width="1.6" paint-order="stroke" stroke-linejoin="round">
<path id="pb" d="M1224.4 588.4 Q1246 587.6 1262 581 Q1274 575.6 1284 565" fill="none" stroke="none"/><text><textPath href="#pb" textLength="60" lengthAdjust="spacing">Brüsseler Str.</textPath></text>
<text x="1311" y="562" transform="rotate(20 1311 562)" letter-spacing="0.2">Amsterdamer Str.</text>
<text x="1349" y="637.6" transform="rotate(-9 1349 637.6)">Rutha</text>
</g>
<g font-size="8.6" font-weight="700" fill="#4f6072" stroke="#d6dce6" stroke-width="1.4" paint-order="stroke" stroke-linejoin="round">
<text x="1344.6" y="470.4" transform="rotate(55 1344.6 470.4)" letter-spacing="0.2">Stadtrodaer Str.</text>
<text x="1484" y="633.4" transform="rotate(8 1484 633.4)" letter-spacing="0.15">Stadtrodaer Str.</text>
</g>
<g filter="url(#boxsh)"><rect x="1169.6" y="530.2" width="80.6" height="18.8" rx="2" fill="#fff"/><path d="M1203.4 548.8 H1221 L1212.2 556 Z" fill="#fff"/></g>
<text x="1174.6" y="542.4" font-size="9.4" fill="#2a2a2a" textLength="70.6" lengthAdjust="spacing">Device Location</text>
<text x="864.6" y="641.2" font-size="12.6" font-weight="700" fill="#fff" stroke="#98a5a0" stroke-width="1.3" paint-order="stroke" textLength="41" lengthAdjust="spacingAndGlyphs">Google</text>
<rect x="1257" y="637.6" width="307" height="9.9" fill="#f5f5f5" opacity=".72"/>
<rect x="1188" y="638.4" width="66" height="9.1" fill="#f5f5f5" opacity=".6"/>
<g font-size="7">
<text x="1189" y="645.6" font-weight="700" textLength="64" lengthAdjust="spacingAndGlyphs" fill="#222">Keyboard shortcuts</text>
<text x="1263" y="645.6" textLength="192.4" lengthAdjust="spacingAndGlyphs" fill="#444">Map data ©2025 GeoBasis-DE/BKG (©2009), Google</text>
<text x="1464.8" y="645.6" textLength="22" lengthAdjust="spacingAndGlyphs" fill="#444">Terms</text>
<text x="1496.8" y="645.6" font-weight="700" textLength="62" lengthAdjust="spacingAndGlyphs" fill="#222">Report a map error</text>
</g>
<g filter="url(#boxsh)"><rect x="1536.4" y="473" width="22.4" height="23" rx="2" fill="#fff"/><rect x="1536" y="585.8" width="23" height="46" rx="2" fill="#fff"/></g>
<path d="M1541.2 482 V478.4 H1544.8 M1550.4 478.4 H1554 V482 M1554 487 V490.6 H1550.4 M1544.8 490.6 H1541.2 V487" stroke="#666" stroke-width="1.7" fill="none"/>
<path d="M1543 597.4 H1552 M1547.5 592.9 V601.9 M1543 621 H1552" stroke="#666" stroke-width="1.5" fill="none"/>
<rect x="1539.4" y="608.6" width="16.2" height="0.8" fill="#e6e6e6"/>
</svg>

<!-- dropdown -->
<div class="abs" style="left:876px;top:452px;width:92px;height:101px;background:#fff;box-shadow:0 3px 10px 3px rgba(0,0,0,.28);z-index:20"></div>
<div class="abs" style="left:876px;top:426px;width:92px;height:26px;background:linear-gradient(180deg,#fff 0,#fdfdfd 55%,#efefef 100%);z-index:21"></div>
<div class="abs" style="left:876px;top:452px;width:92px;height:1px;background:#e9e9e9;z-index:22"></div>
<div class="abs" style="left:872px;top:422px;width:100px;height:134.5px;border:4px solid #e8703a;border-radius:3px;z-index:25"></div>
<svg class="abs" style="left:900px;top:370px;z-index:26" width="90" height="90" viewBox="900 370 90 90">
<polygon points="952.3,378.2 966.2,385.1 944.2,426.9 950.2,430.8 929,436.9 923.3,416.6 928.8,419.8" fill="#e8703a"/>
<polygon points="924.2,439.3 931.4,439.3 927.8,443.6" fill="#666"/>
</svg>

<div id="txt">
<span class="t" style="left:117.70px;top:18px;font-size:18.2px;font-weight:400;color:#6a6a6a;letter-spacing:0.918px;">Coffee Machine</span>
<span class="t" style="left:331.30px;top:20px;font-size:11.6px;font-weight:400;color:#2a2a2a;letter-spacing:-0.071px;">Device</span>
<span class="t" style="left:427.00px;top:20px;font-size:11.6px;font-weight:400;color:#757575;letter-spacing:0.145px;">Modules</span>
<span class="t" style="left:532.10px;top:20px;font-size:11.6px;font-weight:400;color:#757575;letter-spacing:0.023px;">Statistics</span>
<span class="t" style="left:1373.70px;top:20px;font-size:11.4px;font-weight:400;color:#5b97f5;letter-spacing:0.086px;">SHOW CODE</span>
<span class="t" style="left:1478.10px;top:20px;font-size:11.4px;font-weight:400;color:#d83a4a;letter-spacing:-0.263px;">DELETE</span>
<span class="t" style="left:1554.10px;top:20px;font-size:11.4px;font-weight:400;color:#ffffff;letter-spacing:-0.118px;">EDIT</span>
<span class="t" style="left:133.10px;top:63px;font-size:10.4px;font-weight:500;color:#2e2e2e;letter-spacing:0.533px;-webkit-text-stroke:.28px #2e2e2e;">Template</span>
<span class="t" style="left:195.90px;top:64px;font-size:8.4px;font-weight:400;color:#7a7a7a;letter-spacing:0.556px;">SHOW TEMPLATE</span>
<span class="t" style="left:133.10px;top:81px;font-size:11.2px;font-weight:400;color:#8a8a8a;letter-spacing:0.242px;">Coffee Machine</span>
<span class="t" style="left:133.10px;top:104px;font-size:10.4px;font-weight:500;color:#2e2e2e;letter-spacing:0.587px;-webkit-text-stroke:.28px #2e2e2e;">Title</span>
<span class="t" style="left:133.10px;top:123px;font-size:11.2px;font-weight:400;color:#8a8a8a;letter-spacing:0.242px;">Coffee Machine</span>
<span class="t" style="left:133.10px;top:154px;font-size:10.4px;font-weight:500;color:#2e2e2e;letter-spacing:0.562px;-webkit-text-stroke:.28px #2e2e2e;">Manufacturer</span>
<span class="t" style="left:133.10px;top:174px;font-size:11.2px;font-weight:400;color:#8a8a8a;letter-spacing:0.470px;">sqanit GmbH</span>
<span class="t" style="left:133.10px;top:205px;font-size:10.4px;font-weight:500;color:#2e2e2e;letter-spacing:0.326px;-webkit-text-stroke:.28px #2e2e2e;">Model / Type</span>
<span class="t" style="left:133.10px;top:224px;font-size:10.6px;font-weight:400;color:#8a8a8a;letter-spacing:-0.385px;">SQ.2</span>
<span class="t" style="left:133.10px;top:255px;font-size:10.4px;font-weight:500;color:#2e2e2e;letter-spacing:0.492px;-webkit-text-stroke:.28px #2e2e2e;">Description</span>
<span class="t" style="left:133.50px;top:275px;font-size:11.2px;font-weight:400;color:#aaaaaa;letter-spacing:0.000px;">-</span>
<span class="t" style="left:133.10px;top:298px;font-size:10.4px;font-weight:500;color:#2e2e2e;letter-spacing:0.556px;-webkit-text-stroke:.28px #2e2e2e;">Additional Information</span>
<span class="t" style="left:133.50px;top:317px;font-size:11.2px;font-weight:400;color:#aaaaaa;letter-spacing:0.000px;">-</span>
<span class="t" style="left:133.10px;top:340px;font-size:10.4px;font-weight:500;color:#2e2e2e;letter-spacing:0.484px;-webkit-text-stroke:.28px #2e2e2e;">Related Departments</span>
<span class="t" style="left:137.40px;top:363px;font-size:8.0px;font-weight:400;color:#808080;letter-spacing:0.336px;">1.01.000 Germany</span>
<span class="t" style="left:133.10px;top:385px;font-size:10.4px;font-weight:500;color:#2e2e2e;letter-spacing:0.349px;-webkit-text-stroke:.28px #2e2e2e;">Creation Flow</span>
<span class="t" style="left:217.30px;top:386px;font-size:8.4px;font-weight:400;color:#7a7a7a;letter-spacing:0.626px;">SHOW CREATION FLOW</span>
<span class="t" style="left:133.10px;top:403px;font-size:11.2px;font-weight:400;color:#8a8a8a;letter-spacing:0.289px;">Standard Creation Flow</span>
<span class="t" style="left:147.90px;top:437px;font-size:11.2px;font-weight:400;color:#2a2a2a;letter-spacing:0.215px;">General</span>
<span class="t" style="left:248.50px;top:437px;font-size:11.2px;font-weight:400;color:#757575;letter-spacing:0.362px;">Appearance</span>
<span class="t" style="left:372.40px;top:437px;font-size:11.2px;font-weight:400;color:#757575;letter-spacing:0.671px;">Attachments</span>
<span class="t" style="left:501.60px;top:437px;font-size:11.2px;font-weight:400;color:#757575;letter-spacing:0.532px;">Internal Attachments</span>
<span class="t" style="left:674.00px;top:437px;font-size:11.2px;font-weight:400;color:#757575;letter-spacing:0.039px;">Codes</span>
<span class="t" style="left:766.70px;top:437px;font-size:11.2px;font-weight:400;color:#757575;letter-spacing:0.414px;">Compliance</span>
<span class="t" style="left:978.50px;top:437px;font-size:11.2px;font-weight:400;color:#757575;letter-spacing:0.146px;">AI Conversations</span>
<span class="t" style="left:1126.10px;top:437px;font-size:11.2px;font-weight:400;color:#757575;letter-spacing:0.264px;">Tickets</span>
<span class="t" style="left:1222.70px;top:437px;font-size:11.2px;font-weight:400;color:#757575;letter-spacing:0.044px;">Video Sessions</span>
<span class="t" style="left:133.20px;top:467px;font-size:15.8px;font-weight:400;color:#6a6a6a;letter-spacing:0.644px;">Device-specific information</span>
<span class="t" style="left:133.10px;top:495px;font-size:10.4px;font-weight:500;color:#2e2e2e;letter-spacing:0.373px;-webkit-text-stroke:.28px #2e2e2e;">Serial Number</span>
<span class="t" style="left:133.10px;top:513px;font-size:11.2px;font-weight:400;color:#8a8a8a;letter-spacing:0.341px;">0456768980</span>
<span class="t" style="left:133.10px;top:536px;font-size:10.4px;font-weight:500;color:#2e2e2e;letter-spacing:0.388px;-webkit-text-stroke:.28px #2e2e2e;">Service Contract Number</span>
<span class="t" style="left:133.50px;top:553px;font-size:11.2px;font-weight:400;color:#aaaaaa;letter-spacing:0.000px;">-</span>
<span class="t" style="left:133.10px;top:578px;font-size:10.4px;font-weight:500;color:#2e2e2e;letter-spacing:0.505px;-webkit-text-stroke:.28px #2e2e2e;">Warranty</span>
<span class="t" style="left:133.50px;top:595px;font-size:11.2px;font-weight:400;color:#aaaaaa;letter-spacing:0.000px;">-</span>
<span class="t" style="left:133.10px;top:619px;font-size:10.4px;font-weight:500;color:#2e2e2e;letter-spacing:0.391px;-webkit-text-stroke:.28px #2e2e2e;">Warranty Date</span>
<span class="t" style="left:133.50px;top:637px;font-size:11.2px;font-weight:400;color:#aaaaaa;letter-spacing:0.000px;">-</span>
<span class="t" style="left:133.10px;top:660px;font-size:10.4px;font-weight:500;color:#2e2e2e;letter-spacing:0.447px;-webkit-text-stroke:.28px #2e2e2e;">Installation</span>
<span class="t" style="left:133.50px;top:678px;font-size:11.2px;font-weight:400;color:#aaaaaa;letter-spacing:0.000px;">-</span>
<span class="t" style="left:133.10px;top:702px;font-size:10.4px;font-weight:500;color:#2e2e2e;letter-spacing:0.412px;-webkit-text-stroke:.28px #2e2e2e;">Installation Date</span>
<span class="t" style="left:133.50px;top:719px;font-size:11.2px;font-weight:400;color:#aaaaaa;letter-spacing:0.000px;">-</span>
<span class="t" style="left:1246.40px;top:179px;font-size:12.4px;font-weight:400;color:#465252;letter-spacing:0.177px;">SERVICE ASSISTANT</span>
<span class="t" style="left:1246.40px;top:232px;font-size:12.4px;font-weight:400;color:#4866a0;letter-spacing:0.492px;">SHOP</span>
<span class="t" style="left:1246.40px;top:284px;font-size:12.4px;font-weight:400;color:#d27363;letter-spacing:0.679px;">DOKUMENTE</span>
<span class="t" style="left:25.50px;top:51px;font-size:8.6px;font-weight:400;color:#7d7d7d;letter-spacing:0.208px;">DASHBOARD</span>
<span class="t" style="left:36.40px;top:135px;font-size:8.6px;font-weight:400;color:#7d7d7d;letter-spacing:-0.366px;">TICKETS</span>
<span class="t" style="left:17.60px;top:219px;font-size:8.6px;font-weight:400;color:#7d7d7d;letter-spacing:-0.144px;">VIDEO SESSIONS</span>
<span class="t" style="left:40.40px;top:303px;font-size:8.6px;font-weight:400;color:#7d7d7d;letter-spacing:-0.337px;">TASKS</span>
<span class="t" style="left:28.70px;top:386px;font-size:8.6px;font-weight:400;color:#7d7d7d;letter-spacing:-0.159px;">TEMPLATES</span>
<span class="t" style="left:35.60px;top:471px;font-size:8.6px;font-weight:400;color:#dde9ff;letter-spacing:-0.239px;">DEVICES</span>
<span class="t" style="left:26.70px;top:554px;font-size:8.6px;font-weight:400;color:#7d7d7d;letter-spacing:-0.196px;">CUSTOMERS</span>
<span class="t" style="left:24.30px;top:638px;font-size:8.6px;font-weight:400;color:#7d7d7d;letter-spacing:0.040px;">MY COMPANY</span>
<span class="t" style="left:38.60px;top:723px;font-size:8.6px;font-weight:400;color:#7d7d7d;letter-spacing:-0.266px;">CODES</span>
<span class="t" style="left:889.70px;top:437px;font-size:11.2px;font-weight:400;color:#757575;letter-spacing:-0.002px;z-index:30;">Tasks</span>
<span class="t" style="left:894.60px;top:467px;font-size:11.2px;font-weight:400;color:#757575;letter-spacing:0.929px;z-index:30;">Combined</span>
<span class="t" style="left:894.60px;top:498px;font-size:11.2px;font-weight:400;color:#757575;letter-spacing:0.459px;z-index:30;">List</span>
<span class="t" style="left:894.60px;top:528px;font-size:11.2px;font-weight:400;color:#757575;letter-spacing:0.528px;z-index:30;">Calendar</span>
</div>
<div id="botfade"></div>
</body></html>
